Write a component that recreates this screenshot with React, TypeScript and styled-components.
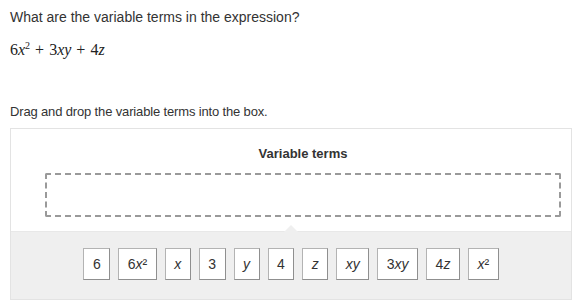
import styled, { createGlobalStyle } from "styled-components";

const GlobalStyle = createGlobalStyle`
  html, body {
    margin: 0;
    padding: 0;
    background: #fff;
  }
  body {
    font-family: "Liberation Sans", Arial, sans-serif;
    color: #333;
  }
`;

const Page = styled.div`
  padding: 9px 7px 0 10px;
`;

const Prompt = styled.p`
  margin: 0;
  font-size: 14px;
  line-height: 17px;
`;

const Expression = styled.div`
  margin: 15px 0 0 0;
  font-family: "Liberation Serif", "Times New Roman", serif;
  font-size: 16px;
  line-height: 18px;
  color: #222;
`;

const Var = styled.i`
  font-style: italic;
`;

const Op = styled.span`
  margin: 0 5px;
`;

const Instruction = styled.p`
  margin: 44px 0 0 0;
  font-size: 13px;
  letter-spacing: -0.15px;
  line-height: 17px;
`;

const Board = styled.div`
  margin-top: 8px;
  border: 1px solid #e3e3e3;
  background: #fff;
`;

const DropArea = styled.div`
  padding: 17px 10px 14px 34px;
`;

const DropTitle = styled.div`
  text-align: center;
  font-weight: bold;
  font-size: 13px;
  line-height: 16px;
  color: #333;
`;

const DropBox = styled.div`
  margin-top: 11px;
  height: 40px;
  border: 2px dashed #9a9a9a;
  border-radius: 2px;
`;

const Tray = styled.div`
  position: relative;
  background: #efefef;
  border-top: 1px solid #e8e8e8;
  display: flex;
  justify-content: center;
  gap: 8px;
  padding: 16px 0 19px 0;

  &::before {
    content: "";
    position: absolute;
    top: -7px;
    left: 50%;
    margin-left: -7px;
    border-left: 7px solid transparent;
    border-right: 7px solid transparent;
    border-bottom: 7px solid #efefef;
  }
`;

const Tile = styled.div`
  box-sizing: border-box;
  height: 32px;
  padding: 0 8.5px;
  display: flex;
  align-items: center;
  justify-content: center;
  background: #fff;
  border: 1px solid #a3a3a3;
  border-color: #b3b3b3 #8f8f8f #8f8f8f #b3b3b3;
  font-size: 14px;
  color: #333;
`;

const Em = styled.i`
  font-style: italic;
`;

const Sup = styled.sup`
  font-size: 10px;
  line-height: 0;
`;

const tiles: React.ReactNode[] = [
  "6",
  <>6<Em>x</Em>²</>,
  <Em>x</Em>,
  "3",
  <Em>y</Em>,
  "4",
  <Em>z</Em>,
  <Em>xy</Em>,
  <>3<Em>xy</Em></>,
  <>4<Em>z</Em></>,
  <><Em>x</Em>²</>,
];

export default function App() {
  return (
    <Page>
      <GlobalStyle />
      <Prompt>What are the variable terms in the expression?</Prompt>
      <Expression>
        6<Var>x</Var>
        <Sup>2</Sup>
        <Op>+</Op>3<Var>xy</Var>
        <Op>+</Op>4<Var>z</Var>
      </Expression>
      <Instruction>Drag and drop the variable terms into the box.</Instruction>
      <Board>
        <DropArea>
          <DropTitle>Variable terms</DropTitle>
          <DropBox />
        </DropArea>
        <Tray>
          {tiles.map((t, i) => (
            <Tile key={i}>{t}</Tile>
          ))}
        </Tray>
      </Board>
    </Page>
  );
}
